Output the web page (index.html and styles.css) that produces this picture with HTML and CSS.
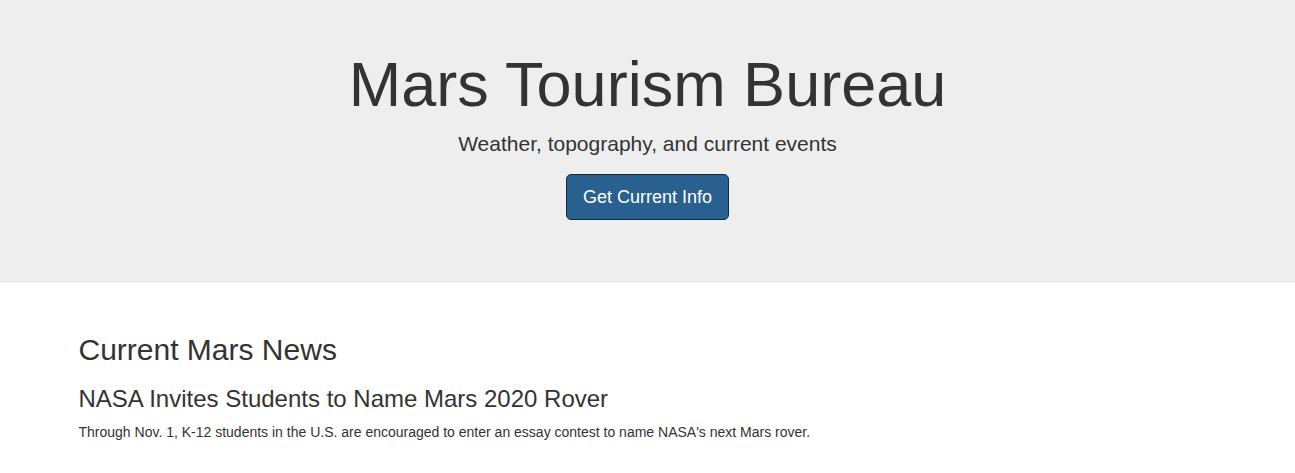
FILE: index.html
```html
<!DOCTYPE html>
<html lang="en">
<head>
<meta charset="utf-8">
<title>Mars Tourism Bureau</title>
<link rel="stylesheet" href="styles.css">
</head>
<body>
<header class="jumbotron">
  <div class="container center">
    <h1 class="title">Mars Tourism Bureau</h1>
    <p class="lead">Weather, topography, and current events</p>
    <a class="btn" href="#">Get Current Info</a>
  </div>
</header>
<main class="container news">
  <h2 class="section-title">Current Mars News</h2>
  <h3 class="news-title">NASA Invites Students to Name Mars 2020 Rover</h3>
  <p class="news-text">Through Nov. 1, K-12 students in the U.S. are encouraged to enter an essay contest to name NASA's next Mars rover.</p>
</main>
</body>
</html>
```
FILE: styles.css
```css
html, body {
  margin: 0;
  padding: 0;
}
body {
  font-family: "Liberation Sans", Arial, Helvetica, sans-serif;
  font-size: 14px;
  line-height: 1.42857;
  color: #333;
  background: #fff;
}
.container {
  width: 1168px;
  margin: 0 auto;
  padding: 0 15px;
  box-sizing: border-box;
}
.center {
  text-align: center;
}
.jumbotron {
  background: #eeeeee;
  padding: 30px 0 63px;
  margin-bottom: 30px;
}
.title {
  font-size: 63px;
  font-weight: 400;
  line-height: 1.1;
  margin: 20px 0 10px;
}
.lead {
  font-size: 21px;
  font-weight: 200;
  line-height: 30px;
  margin: 0 0 15px;
}
.btn {
  display: inline-block;
  box-sizing: border-box;
  height: 46px;
  padding: 10px 16px;
  font-size: 18px;
  line-height: 24px;
  color: #fff;
  text-decoration: none;
  background: #286090;
  border: 1px solid #122b40;
  border-radius: 5px;
}
.news {
  display: flow-root;
}
.section-title {
  font-size: 30px;
  font-weight: 400;
  line-height: 1.1;
  margin: 20px 0 10px;
}
.news-title {
  font-size: 24px;
  font-weight: 400;
  line-height: 1.1;
  margin: 20px 0 10px;
}
.news-text {
  margin: 0 0 10px;
}
```
